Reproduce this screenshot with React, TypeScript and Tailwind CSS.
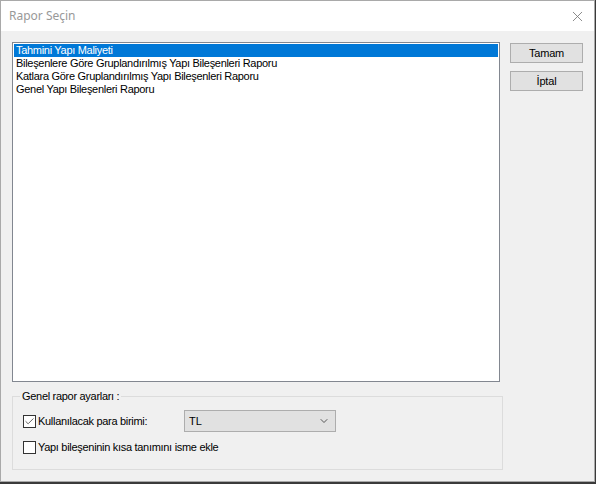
import { Check, ChevronDown, X } from "lucide-react";

const reports = [
  "Tahmini Yapı Maliyeti",
  "Bileşenlere Göre Gruplandırılmış Yapı Bileşenleri Raporu",
  "Katlara Göre Gruplandırılmış Yapı Bileşenleri Raporu",
  "Genel Yapı Bileşenleri Raporu",
];

const ui = { fontFamily: '"Liberation Sans", Arial, sans-serif' };

function CheckRow({ checked, label }: { checked?: boolean; label: string }) {
  return (
    <label className="flex h-[13px] items-center">
      <span className="flex h-[13px] w-[13px] items-center justify-center border border-[#333] bg-white">
        {checked && <Check className="h-[11px] w-[11px] text-[#555]" strokeWidth={2} />}
      </span>
      <span className="ml-[2px] text-[11px] leading-none tracking-[-0.3px] text-black">{label}</span>
    </label>
  );
}

export default function App() {
  return (
    <div className="h-[484px] w-[596px] bg-[#3a3a3a]" style={ui}>
      <div className="flex h-[482px] w-[595px] flex-col border border-[#a9a9a9] bg-[#f0f0f0]">
        {/* title bar */}
        <div className="flex h-[30px] shrink-0 items-center justify-between bg-white pl-[8px] pr-[8px]">
          <span
            className="text-[12px] text-[#999]"
            style={{ fontFamily: '"Noto Sans", "Open Sans", sans-serif' }}
          >
            Rapor Seçin
          </span>
          <X className="h-[17px] w-[17px] text-[#777]" strokeWidth={1.2} />
        </div>

        <div className="flex flex-1 flex-col px-[11px] pt-[11px]">
          <div className="flex gap-[10px]">
            {/* report list */}
            <div className="h-[340px] w-[489px] border border-[#828790] bg-white p-[1px]">
              {reports.map((r, i) => (
                <div
                  key={r}
                  className={
                    "h-[13px] pl-[2px] text-[11px] leading-[13px] tracking-[-0.3px] " +
                    (i === 0 ? "bg-[#0078d7] text-white" : "text-black")
                  }
                >
                  {r}
                </div>
              ))}
            </div>

            <div className="flex flex-col gap-[8px] pt-[1px]">
              {["Tamam", "İptal"].map((b) => (
                <button
                  key={b}
                  className="flex h-[20px] w-[73px] items-center justify-center border border-[#adadad] bg-[#e1e1e1] text-[11px] tracking-[-0.2px] text-black"
                >
                  {b}
                </button>
              ))}
            </div>
          </div>

          {/* settings group */}
          <fieldset className="mt-[9px] h-[79px] w-[491px] border border-[#dcdcdc] px-[10px] pb-0">
            <legend className="-ml-[3px] px-[2px] text-[11px] leading-none tracking-[-0.3px] text-black">
              Genel rapor ayarları :
            </legend>
            <div className="mt-[8px] flex items-center">
              <div className="w-[161px]">
                <CheckRow checked label="Kullanılacak para birimi:" />
              </div>
              <div className="flex h-[22px] w-[152px] items-center justify-between border border-[#adadad] bg-[#e1e1e1] pl-[4px] pr-[5px]">
                <span className="text-[11px] text-black">TL</span>
                <ChevronDown className="h-[12px] w-[12px] text-[#333]" strokeWidth={1.6} />
              </div>
            </div>
            <div className="mt-[9px]">
              <CheckRow label="Yapı bileşeninin kısa tanımını isme ekle" />
            </div>
          </fieldset>
        </div>
      </div>
    </div>
  );
}
